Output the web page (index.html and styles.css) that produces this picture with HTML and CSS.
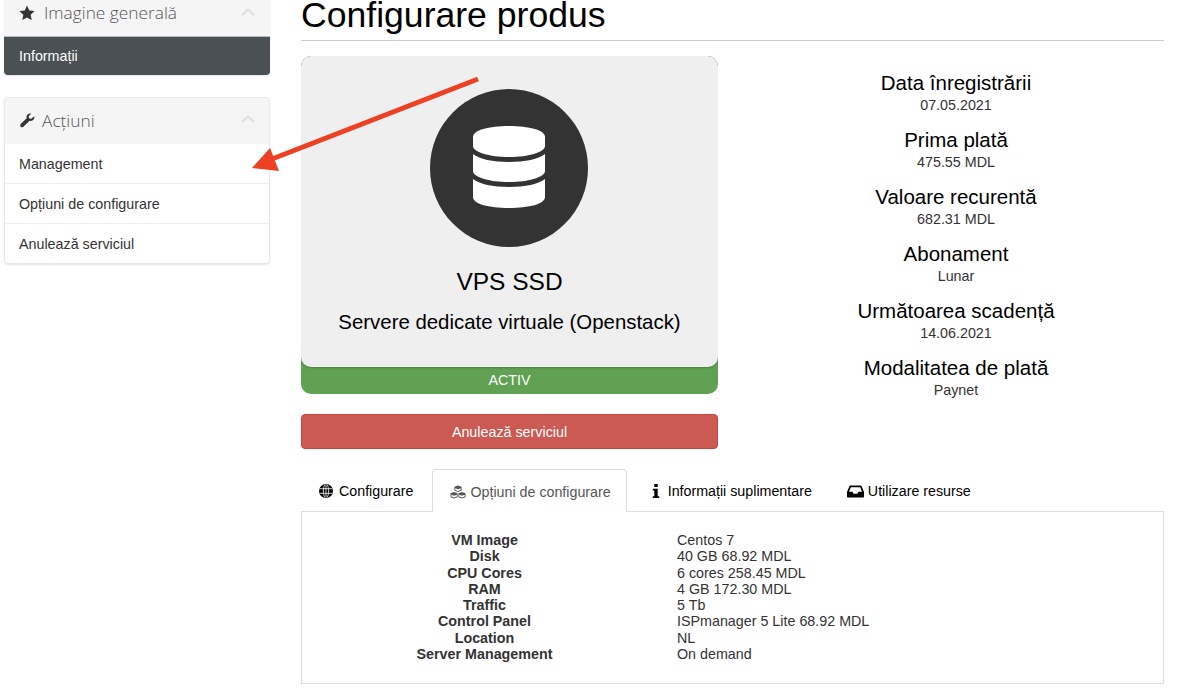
FILE: index.html
```html
<!DOCTYPE html>
<html lang="ro">
<head>
    <meta charset="UTF-8">
    <meta name="viewport" content="width=device-width, initial-scale=1.0">
    <title>Configurare produs</title>
    <link rel="stylesheet" href="styles.css">
</head>
<body>
    <div class="page">
        <!-- Coloana din stanga -->
        <aside class="sidebar">
            <div class="panel panel-first">
                <div class="panel-heading">
                    <svg class="panel-icon" viewBox="0 0 24 24"><path d="M12 .8l3.400 7.300 8 1-5.900 5.500 1.600 7.900L12 18.600l-7.100 3.900 1.600-7.900L.6 9.100l8-1z"/></svg>
                    <span class="panel-title">Imagine generală</span>
                    <svg class="chevron" viewBox="0 0 14 8"><path d="M1 7l6-5.500L13 7"/></svg>
                </div>
                <a class="panel-item panel-item-active">Informații</a>
            </div>

            <div class="panel">
                <div class="panel-heading">
                    <svg class="panel-icon" viewBox="0 0 24 24"><path d="M23 6.500c.4 2-.2 4-1.700 5.400-1.500 1.400-3.500 1.900-5.400 1.400L6.600 22.100c-1.100 1.100-2.900 1.100-4 0-1.100-1.100-1.100-2.900 0-4l8.900-8.800c-.5-1.900 0-3.900 1.400-5.400C14.400 2.400 16.500 1.800 18.400 2.300l-3.900 3.900.6 3.400 3.400.6z"/></svg>
                    <span class="panel-title">Acțiuni</span>
                    <svg class="chevron" viewBox="0 0 14 8"><path d="M1 7l6-5.500L13 7"/></svg>
                </div>
                <a class="panel-item">Management</a>
                <a class="panel-item">Opțiuni de configurare</a>
                <a class="panel-item">Anulează serviciul</a>
            </div>
        </aside>

        <main class="content">
            <h1>Configurare produs</h1>

            <div class="overview">
                <div class="product-col">
                    <div class="product-card">
                        <div class="product-body">
                            <div class="product-circle">
                                <svg class="db-icon" viewBox="0 0 72 82">
                                    <path d="M0 11C0 4 16 0 36 0s36 4 36 11v9c0 6-16 11-36 11S0 26 0 20z"/>
                                    <path d="M0 28c6 5 20 8 36 8s30-3 36-8v17c0 6-16 11-36 11S0 51 0 45z"/>
                                    <path d="M0 53c6 5 20 8 36 8s30-3 36-8v18c0 7-16 11-36 11S0 78 0 71z"/>
                                </svg>
                            </div>
                            <div class="product-name">VPS SSD</div>
                            <div class="product-group">Servere dedicate virtuale (Openstack)</div>
                        </div>
                        <div class="product-status">ACTIV</div>
                    </div>
                    <button class="btn-cancel">Anulează serviciul</button>
                </div>

                <div class="details">
                    <div class="detail"><h4>Data înregistrării</h4><p>07.05.2021</p></div>
                    <div class="detail"><h4>Prima plată</h4><p>475.55 MDL</p></div>
                    <div class="detail"><h4>Valoare recurentă</h4><p>682.31 MDL</p></div>
                    <div class="detail"><h4>Abonament</h4><p>Lunar</p></div>
                    <div class="detail"><h4>Următoarea scadență</h4><p>14.06.2021</p></div>
                    <div class="detail"><h4>Modalitatea de plată</h4><p>Paynet</p></div>
                </div>
            </div>

            <!-- Taburi -->
            <div class="tabs">
                <a class="tab tab-globe">
                    <svg class="tab-icon" viewBox="0 0 14 14"><circle cx="7" cy="7" r="7"/><path class="globe-lines" d="M.5 4.700h13M.5 9.300h13M7 .5v13M6 .5C3.800 3.500 3.800 10.500 6 13.500M8 .5c2.200 3 2.200 10 0 13"/></svg>
                    Configurare
                </a>
                <a class="tab tab-active">
                    <svg class="tab-icon tab-icon-cubes" viewBox="0 0 16 14"><path d="M8 .5l3.600 1.300v3.800L8 7 4.400 5.600V1.800zM4.100 7l3.500 1.300v3.900L4.100 13.500.5 12.200V8.300zM11.900 7l3.600 1.300v3.900l-3.600 1.300-3.500-1.300V8.300z"/><path d="M5.300 3.200L8 4.200l2.700-1v1.800L8 6l-2.700-1zM1.400 9.700l2.700 1 2.700-1v1.800l-2.700 1-2.700-1zM9.200 9.700l2.700 1 2.700-1v1.800l-2.700 1-2.700-1z" fill="#fff"/></svg>
                    Opțiuni de configurare
                </a>
                <a class="tab tab-info">
                    <svg class="tab-icon tab-icon-info" viewBox="0 0 8 14"><path d="M2.300 0h3.400v3H2.300zM.8 4.800h4.900v7.400h1.500V14H.8v-1.800h1.500V6.600H.8z"/></svg>
                    Informații suplimentare
                </a>
                <a class="tab tab-usage">
                    <svg class="tab-icon tab-icon-inbox" viewBox="0 0 17 13"><path d="M3.500.5h10c.5 0 .9.300 1.100.7L17 7v4.500c0 .6-.5 1-1 1H1c-.5 0-1-.4-1-1V7l2.400-5.800C2.600.8 3 .5 3.500.5zM3.800 2.200L2 6.800h3.600l1 2h3.800l1-2H15l-1.800-4.600z" fill-rule="evenodd"/></svg>
                    Utilizare resurse
                </a>
            </div>
            <div class="tab-panel">
                <div class="opt-row"><b>VM Image</b><span>Centos 7</span></div>
                <div class="opt-row"><b>Disk</b><span>40 GB 68.92 MDL</span></div>
                <div class="opt-row"><b>CPU Cores</b><span>6 cores 258.45 MDL</span></div>
                <div class="opt-row"><b>RAM</b><span>4 GB 172.30 MDL</span></div>
                <div class="opt-row"><b>Traffic</b><span>5 Tb</span></div>
                <div class="opt-row"><b>Control Panel</b><span>ISPmanager 5 Lite 68.92 MDL</span></div>
                <div class="opt-row"><b>Location</b><span>NL</span></div>
                <div class="opt-row"><b>Server Management</b><span>On demand</span></div>
            </div>
        </main>
    </div>

    <!-- Sageata adnotare -->
    <svg class="arrow" viewBox="0 0 1200 694">
        <path d="M478 79L272 159" stroke="#ee4023" stroke-width="5" fill="none"/>
        <path d="M252 168L270 148L279 171z" fill="#ee4023"/>
    </svg>
</body>
</html>
```

FILE: styles.css
```css
* {
    box-sizing: border-box;
}
body {
    margin: 0;
    height: 694px;
    overflow: hidden;
    font-family: "Liberation Sans", Arial, sans-serif;
    font-size: 14.300px;
    color: #333;
    background: #fff;
}
.page {
    display: flex;
    align-items: flex-start;
    padding-left: 4px;
}
.sidebar {
    width: 266px;
    margin-right: 31px;
    flex-shrink: 0;
}
.panel {
    background: #fff;
    border: 1px solid #e8e8e8;
    border-radius: 4px;
    box-shadow: 0 1px 2px rgba(0, 0, 0, 0.1);
    margin-bottom: 22px;
    overflow: hidden;
}
.panel-first {
    margin-top: -9px;
    border: none;
}
.panel-heading {
    display: flex;
    align-items: center;
    height: 46px;
    padding: 0 14px;
    background: #f5f5f5;
}
.panel-first .panel-heading {
    padding: 0 15px;
    border-bottom: 1px solid #bbb;
}
.panel-icon {
    width: 16px;
    height: 16px;
    margin-top: -2px;
    fill: #333;
    margin-right: 7px;
}
.panel-first .panel-icon {
    margin-right: 9px;
}
.panel-title {
    margin-top: -2px;
    font-family: "Open Sans", sans-serif;
    font-weight: 300;
    font-size: 17.300px;
    color: #555;
}
.chevron {
    width: 14px;
    height: 8px;
    margin-left: auto;
    margin-top: -4px;
    fill: none;
    stroke: #ddd;
    stroke-width: 2;
}
.panel-item {
    display: block;
    height: 40px;
    line-height: 40px;
    padding: 0 14px;
    color: #333;
    border-top: 1px solid #efefef;
}
.panel-item:first-of-type {
    border-top: none;
    height: 39px;
    line-height: 40px;
}
.panel-first .panel-item {
    height: 38px;
    line-height: 38px;
    padding: 0 15px;
    background: #4a5154;
    color: #fff;
}
.content {
    width: 863px;
}
h1 {
    margin: -11px 0 0;
    height: 52px;
    font-size: 35.600px;
    font-weight: 400;
    line-height: 53px;
    color: #000;
    border-bottom: 1px solid #ccc;
}
.overview {
    display: flex;
    margin-top: 15px;
}
.product-col {
    width: 417px;
}
.product-card {
    background: #60a153;
    border-radius: 10px;
    height: 338px;
    overflow: hidden;
}
.product-body {
    height: 311px;
    background: #efefef;
    border-radius: 10px;
    box-shadow: 0 1px 2px rgba(0, 0, 0, 0.2);
    padding-top: 33px;
    text-align: center;
}
.product-circle {
    width: 158px;
    height: 158px;
    margin: 0 0 0 129px;
    border-radius: 50%;
    background: #333;
    display: flex;
    align-items: center;
    justify-content: center;
}
.db-icon {
    width: 72px;
    height: 82px;
    margin-top: -2px;
    fill: #fff;
}
.product-name {
    margin-top: 21px;
    font-size: 24.500px;
    line-height: 28px;
    color: #000;
}
.product-group {
    margin-top: 14px;
    font-size: 20.400px;
    line-height: 24px;
    color: #000;
}
.product-status {
    height: 27px;
    line-height: 27px;
    text-align: center;
    color: #fff;
}
.btn-cancel {
    display: block;
    width: 100%;
    height: 35px;
    margin-top: 20px;
    border: 1px solid #c9453e;
    border-radius: 4px;
    background: #cb5a52;
    color: #fff;
    font-family: inherit;
    font-size: 14.300px;
}
.details {
    flex: 1;
    margin-left: 30px;
    padding-top: 14px;
    text-align: center;
}
.detail {
    height: 57px;
}
.detail h4 {
    margin: 0;
    font-size: 20.500px;
    font-weight: 400;
    line-height: 25px;
    color: #000;
}
.detail p {
    margin: 1px 0 0;
    line-height: 18px;
}
.tabs {
    display: flex;
    margin-top: 20px;
    height: 42px;
    font-size: 14.250px;
}
.tab {
    display: flex;
    align-items: center;
    height: 42px;
    padding-top: 2px;
    color: #000;
    border: 1px solid transparent;
}
.tab-globe {
    padding-left: 17px;
    padding-right: 18px;
}
.tab-active {
    padding-left: 17px;
    padding-right: 15px;
    color: #555;
    background: #fff;
    border-color: #ddd;
    border-bottom-color: #fff;
    border-radius: 4px 4px 0 0;
    height: 43px;
    position: relative;
    z-index: 1;
}
.tab-info {
    padding-left: 17px;
    padding-right: 18px;
}
.tab-usage {
    padding-left: 15px;
    padding-right: 15px;
}
.tab-icon {
    width: 14px;
    height: 14px;
    margin-right: 6px;
    fill: #000;
}
.tab-icon-cubes {
    width: 16px;
    margin-right: 4px;
    fill: #555;
}
.tab-icon-info {
    width: 8px;
    margin-left: 7px;
    margin-right: 8px;
}
.tab-icon-inbox {
    width: 17px;
    height: 13px;
    margin-right: 4px;
}
.globe-lines {
    fill: none;
    stroke: #fff;
    stroke-width: 0.800;
}
.tab-panel {
    height: 173px;
    border: 1px solid #ddd;
    padding: 20px 0 0;
}
.opt-row {
    display: flex;
    height: 16.280px;
    line-height: 16.280px;
}
.opt-row b {
    width: 365px;
    text-align: center;
    color: #333;
}
.opt-row span {
    margin-left: 10px;
}
.arrow {
    position: absolute;
    left: 0;
    top: 0;
    width: 1200px;
    height: 694px;
    pointer-events: none;
}
```
